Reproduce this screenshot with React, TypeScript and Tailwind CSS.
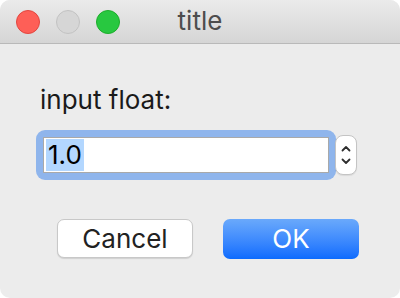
import React from "react";

const font = { fontFamily: "Inter, 'Liberation Sans', sans-serif" };

function Light({ color }: { color: string }) {
  return <div className={`w-[24px] h-[24px] rounded-full border ${color}`} />;
}

export default function App() {
  return (
    <div className="w-[400px] h-[298px] bg-white" style={font}>
      <div className="w-full h-full rounded-[10px] overflow-hidden bg-[#ececec] flex flex-col">
        {/* title bar */}
        <div className="relative h-[44px] shrink-0 bg-gradient-to-b from-[#ebebeb] to-[#d5d5d5] border-b border-[#b9b9b9] flex items-center">
          <div className="flex gap-[16px] pl-[16px]">
            <Light color="bg-[#fe5f57] border-[#e2463f]" />
            <Light color="bg-[#d6d6d6] border-[#c2c2c2]" />
            <Light color="bg-[#28c840] border-[#1dad2b]" />
          </div>
          <div className="absolute inset-0 flex items-center justify-center text-[26px] text-[#4d4d4d] leading-none pb-[1px]">
            title
          </div>
        </div>

        {/* body */}
        <div className="flex flex-col pl-[40px]">
          <div className="mt-[40px] text-[26px] leading-[32px] text-[#1a1a1a]">input float:</div>
          <div className="mt-[14px] flex items-center">
            <div className="w-[300px] h-[50px] rounded-[9px] bg-[#8fb5ec] p-[7px] -ml-[4px]">
              <div className="h-full bg-white border border-[#a9a9a9] flex items-center pl-[2px]">
                <span className="bg-[#b3d7ff] text-[26px] leading-[32px] text-black px-[2px]">1.0</span>
              </div>
            </div>
            <div className="w-[22px] h-[40px] -ml-[1px] bg-white border border-[#c4c4c4] rounded-[8px] shadow-[0_1px_1px_rgba(0,0,0,0.08)] flex flex-col items-center justify-center gap-[6px]">
              <svg width="10" height="7" viewBox="0 0 10 7">
                <path d="M1.5 5.5 L5 2 L8.5 5.5" fill="none" stroke="#2e2e2e" strokeWidth="1.8" strokeLinecap="round" strokeLinejoin="round" />
              </svg>
              <svg width="10" height="7" viewBox="0 0 10 7">
                <path d="M1.5 1.5 L5 5 L8.5 1.5" fill="none" stroke="#2e2e2e" strokeWidth="1.8" strokeLinecap="round" strokeLinejoin="round" />
              </svg>
            </div>
          </div>
          <div className="mt-[39px] flex gap-[30px] pl-[17px]">
            <button className="w-[136px] h-[39px] rounded-[7px] bg-white border border-[#c8c8c8] shadow-[0_1px_1px_rgba(0,0,0,0.12)] text-[26px] leading-none text-[#222]">
              Cancel
            </button>
            <button className="w-[136px] h-[40px] rounded-[7px] bg-gradient-to-b from-[#6aa9fb] to-[#0a6bfe] text-[26px] leading-none text-white">
              OK
            </button>
          </div>
        </div>
      </div>
    </div>
  );
}
